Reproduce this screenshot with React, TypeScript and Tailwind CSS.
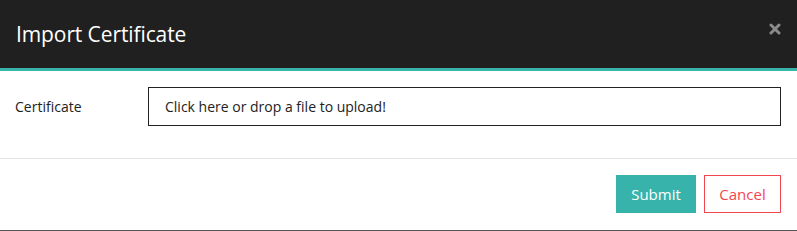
export default function App() {
  return (
    <div className="w-[797px] h-[231px] bg-white flex flex-col font-['Open_Sans',sans-serif] text-[#333]">
      <div className="h-[68px] bg-[#202020] flex items-center justify-between pl-4 pr-4">
        <h4 className="text-white text-[21px] leading-none tracking-[-0.1px]">Import Certificate</h4>
        <button className="mt-[-10px] w-[12px] h-[12px] flex items-center justify-center">
          <svg width="12" height="12" viewBox="0 0 12 12">
            <path d="M2 2 L10 10 M10 2 L2 10" stroke="#8a8a8a" strokeWidth="3" strokeLinecap="round" />
          </svg>
        </button>
      </div>
      <div className="h-[3px] bg-[#37b3ac]" />
      <div className="flex items-start pt-4 pl-[15px] pr-4 h-[88px] border-b border-[#e5e5e5]">
        <label className="w-[133px] text-[14px] h-[39px] flex items-center text-[#222]">Certificate</label>
        <div className="flex-1 h-[39px] border border-[#222] flex items-center pl-4 text-[14px] text-[#222]">
          Click here or drop a file to upload!
        </div>
      </div>
      <div className="flex-1 flex items-start justify-end gap-2 pt-4 pr-4">
        <button className="w-[80px] h-[38px] bg-[#37b3ac] text-white text-[15px]">Submit</button>
        <button className="w-[77px] h-[38px] border border-[#f2464f] text-[#f2464f] text-[15px]">Cancel</button>
      </div>
      <div className="h-px bg-[#555]" />
    </div>
  );
}
